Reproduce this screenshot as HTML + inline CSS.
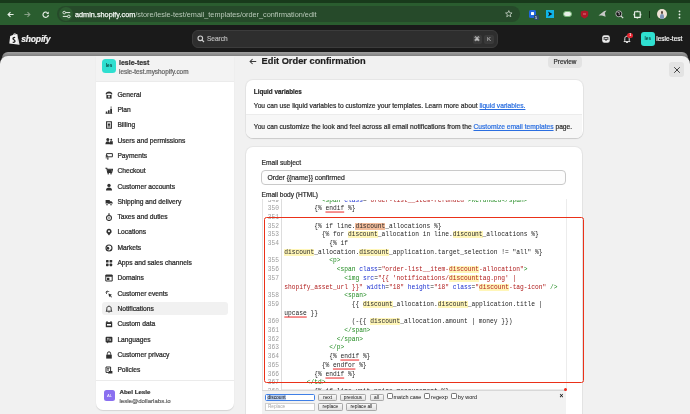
<!DOCTYPE html>
<html><head><meta charset="utf-8">
<style>
*{margin:0;padding:0;box-sizing:border-box}
html,body{width:690px;height:414px;overflow:hidden;background:#1a1a1a;font-family:"Liberation Sans",sans-serif;position:relative}
body{will-change:transform}
.a{position:absolute}
#chrome{left:0;top:0;width:690px;height:25.4px;background:#2a5d2f}
#topband{left:0;top:0;width:690px;height:2.8px;background:#183a1b}
#url{left:57px;top:5.8px;width:463px;height:16px;border-radius:8px;background:#264a2a}
#urltext{left:75px;top:8.7px;font-size:7.3px;color:#b9c9b9;white-space:nowrap;line-height:12px}
#urltext b{color:#f2f6f2;font-weight:normal;-webkit-text-stroke:.25px #f2f6f2}
#topbar{left:0;top:25px;width:690px;height:28px;background:#1a1a1a}
#search{left:192px;top:30px;width:306px;height:18px;border-radius:6px;background:#2e2e2e;border:1px solid #3c3c3c}
#stripe{left:2px;top:51.8px;width:686px;height:6px;background:linear-gradient(#a0a0a0,#707070);border-radius:8px 8px 0 0}
#page{left:0;top:55.6px;width:690px;height:358.4px;background:#f1f1f1;border-radius:8px 8px 0 0}
#side{left:96px;top:56px;width:138px;height:354px;background:#fff;border-radius:0 0 7px 7px;box-shadow:0 1px 1px rgba(0,0,0,.12)}
#sidehead{left:96px;top:55.6px;width:138px;height:26px;background:#f3f3f3;border-bottom:1px solid #ebebeb}
.nav{position:absolute;left:117.4px;font-size:6.7px;color:#2a2a2a;white-space:nowrap;line-height:10px;-webkit-text-stroke:.24px #2a2a2a}
.ico{position:absolute;left:104.5px;width:8px;height:8px}
.card{position:absolute;background:#fff;border-radius:7px;box-shadow:0 1px 1px rgba(0,0,0,.12),0 0 0 1px rgba(0,0,0,.045)}
.t{position:absolute;white-space:nowrap;line-height:10px;color:#2a2a2a;-webkit-text-stroke:.2px currentColor}
#code{left:262px;top:199px;width:305px;height:191px;background:#fff;border:1px solid #ececec;border-top:none;overflow:hidden}
#gutter{left:262px;top:199px;width:20px;height:191px;background:#fff;border-right:1px solid #ddd;border-left:1px solid #e3e3e3}
#codeclip{left:262px;top:199.5px;width:304px;height:190px;overflow:hidden}
.ln{position:absolute;left:0;width:17px;text-align:right;font-family:"Liberation Mono",monospace;font-size:6.24px;color:#9c9c9c;line-height:8.7px;transform:scaleY(1.25);transform-origin:0 50%}
.cl{position:absolute;left:22.3px;font-family:"Liberation Mono",monospace;font-size:6.24px;color:#262626;line-height:8.7px;white-space:pre;transform:scaleY(1.25);transform-origin:0 50%}
.tg{color:#1f8a1f}.at{color:#1a2fd0}.st{color:#b01c1c}
.hl{background:linear-gradient(transparent 8%,#fff6b8 8%,#fff6b8 92%,transparent 92%)}.cur{background:linear-gradient(transparent 8%,#f3bd9c 8%,#f3bd9c 92%,transparent 92%)}
.sq{text-decoration:underline solid #f05050;text-decoration-thickness:.6px;text-underline-offset:.8px;text-decoration-skip-ink:none}
#redbox{left:264.1px;top:216.8px;width:319.6px;height:166.2px;border:1.8px solid #ea3119;border-radius:2.5px}
#findbar{left:262px;top:389.5px;width:304px;height:25px;background:#f2f2f2;border-top:1px solid #d8d8d8}
.inp{position:absolute;background:#fff;border:.8px solid #c4c4c4;font-size:4.6px;line-height:5.5px;padding-left:1.8px;color:#222}
.btn{position:absolute;height:7px;background:linear-gradient(#f9f9f9,#e2e2e2);border:.8px solid #a8a8a8;border-radius:1.2px;font-size:4.8px;line-height:5.6px;text-align:center;color:#111}
.cb{position:absolute;width:6px;height:6.3px;border:.7px solid #777;border-radius:1.2px;background:#fff}
.fl{position:absolute;font-size:5.45px;color:#111;white-space:nowrap;line-height:7px}
</style></head><body>
<!-- Chrome -->
<div id="chrome" class="a"></div>
<div id="topband" class="a"></div>
<div id="url" class="a"></div>
<!-- back / fwd / reload -->
<svg class="a" style="left:7.2px;top:10.9px" width="7" height="7" viewBox="0 0 7 7"><path d="M6.6 3.5H1.2M3.5 1.1 1.1 3.5 3.5 5.9" fill="none" stroke="#e6eee6" stroke-width="1.2"/></svg>
<svg class="a" style="left:24.3px;top:10.9px" width="7" height="7" viewBox="0 0 7 7"><path d="M.4 3.5h5.4M3.5 1.1 5.9 3.5 3.5 5.9" fill="none" stroke="#86a086" stroke-width="1.1"/></svg>
<svg class="a" style="left:41.6px;top:10.6px" width="7.4" height="7.4" viewBox="0 0 8 8"><path d="M6.9 4.2A2.9 2.9 0 1 1 5.9 1.8" fill="none" stroke="#e6eee6" stroke-width="1.25"/><path d="M7.3.5V3.3H4.5Z" fill="#e6eee6"/></svg>
<div class="a" style="left:58.5px;top:7px;width:14px;height:14px;border-radius:50%;background:#2d5c31"></div>
<svg class="a" style="left:61.5px;top:9.5px" width="9" height="9" viewBox="0 0 9 9"><path d="M3.6 2.6H8.2M.8 6.4h4.6" stroke="#e6eee6" stroke-width="1"/><circle cx="2.2" cy="2.6" r="1.3" fill="none" stroke="#e6eee6" stroke-width=".9"/><circle cx="6.8" cy="6.4" r="1.3" fill="none" stroke="#e6eee6" stroke-width=".9"/></svg>
<div id="urltext" class="a"><b>admin.shopify.com</b>/store/lesle-test/email_templates/order_confirmation/edit</div>
<!-- star -->
<svg class="a" style="left:505px;top:10.3px" width="7.6" height="7.6" viewBox="0 0 10 10"><path d="M5 .8 6.2 3.7 9.3 3.9 6.9 5.9 7.7 8.9 5 7.2 2.3 8.9 3.1 5.9.7 3.9 3.8 3.7Z" fill="none" stroke="#dfe8df" stroke-width=".9"/></svg>
<!-- extension icons -->
<div class="a" style="left:529px;top:10px;width:7px;height:8px;background:#2266dd;border-radius:1.5px"></div>
<div class="a" style="left:531px;top:11.5px;width:3px;height:3px;background:#fff;border-radius:.5px"></div>
<div class="a" style="left:533.5px;top:15px;width:5px;height:5px;background:#2f4a6a;border-radius:1px;font-size:4px;color:#fff;line-height:5px;text-align:center">5</div>
<div class="a" style="left:546px;top:10px;width:8px;height:8px;background:#11b5e6"></div>
<svg class="a" style="left:546px;top:10px" width="8" height="8" viewBox="0 0 8 8"><path d="M2 1.6 6.4 4 2 6.4 3.2 4Z" fill="#111"/></svg>
<div class="a" style="left:563px;top:11px;width:9px;height:6px;border-radius:3px;background:#e8f0e8;border:1px solid #7ab87a"></div>
<svg class="a" style="left:580px;top:10px" width="9" height="9" viewBox="0 0 9 9"><path d="M.8 1.6 4.5 .6 8.2 1.6V5C8.2 7 4.5 8.6 4.5 8.6S.8 7 .8 5Z" fill="#b01828"/><path d="M3 4h3" stroke="#f0a0a0" stroke-width=".7"/></svg>
<svg class="a" style="left:598px;top:10px" width="9" height="8" viewBox="0 0 9 8"><path d="M.5 5.5 6 1.2 8.5 .6 6.8 3 7.6 6.8 4 5.6Z" fill="#c8c8c8"/></svg>
<svg class="a" style="left:614.5px;top:10px" width="9" height="9" viewBox="0 0 9 9"><circle cx="3.8" cy="3.8" r="3" fill="#111" stroke="#ccc" stroke-width=".8"/><path d="M5.8 5.8 8.2 8.2" stroke="#ddd" stroke-width="1.2"/><path d="M2.6 2.4h1.6v2.8" stroke="#eee" stroke-width=".7" fill="none"/></svg>
<svg class="a" style="left:632.5px;top:9.5px" width="9" height="9" viewBox="0 0 9 9"><path d="M1.6 1.8H7.2V7.4H1.6Z" fill="none" stroke="#eef3ee" stroke-width="1.1" stroke-linejoin="round"/><path d="M3.6 1.2h1.6M7.8 3.8v1.6M3.6 8h1.6M1 3.8v1.6" stroke="#eef3ee" stroke-width="1"/></svg>
<div class="a" style="left:649px;top:10.5px;width:.8px;height:7px;background:#0e2a0e"></div>
<div class="a" style="left:657px;top:9px;width:10px;height:10px;border-radius:50%;background:#efe3d6;overflow:hidden"><div class="a" style="left:3.6px;top:2px;width:2.8px;height:3px;border-radius:50%;background:#5a4a40"></div><div class="a" style="left:2.8px;top:5px;width:4.4px;height:6px;border-radius:2px 2px 0 0;background:#7f96b8"></div></div>
<svg class="a" style="left:677px;top:9.5px" width="5" height="9" viewBox="0 0 5 9"><circle cx="2.5" cy="1.3" r=".9" fill="#e8efe8"/><circle cx="2.5" cy="4.5" r=".9" fill="#e8efe8"/><circle cx="2.5" cy="7.7" r=".9" fill="#e8efe8"/></svg>

<!-- Shopify top bar -->
<div id="topbar" class="a"></div>
<svg class="a" style="left:8.6px;top:32.8px" width="11" height="12" viewBox="0 0 11 12"><path d="M1.2 2.9 4 2.1C4.3 .9 5 .3 5.8.3c.6 0 1 .4 1.2 1l1-.3 2.6 10.8L.3 10.6Z" fill="#f4f4f4"/><path d="M4.8 1.9c.2-.7.6-1 .9-1 .3 0 .5.3.6.7" fill="none" stroke="#1a1a1a" stroke-width=".5"/><path d="M6.1 4.7c-.6-.4-2-.3-2.1.8-.1 1.2 2.1 1.2 2 2.7-.1 1.1-1.4 1.3-2.3.8" fill="none" stroke="#1a1a1a" stroke-width="1.25"/><path d="M8.1 1.1 9.3 11.6" stroke="#c4c4c4" stroke-width=".6"/></svg>
<div class="t" style="left:21.2px;top:34.2px;font-size:8.6px;color:#f2f2f2;font-weight:bold;font-style:italic;letter-spacing:-.2px;line-height:11px">shopify</div>
<div id="search" class="a"></div>
<svg class="a" style="left:196.8px;top:35.2px" width="8" height="8" viewBox="0 0 8 8"><circle cx="3.3" cy="3.3" r="2.3" fill="none" stroke="#d0d0d0" stroke-width="1.1"/><path d="M5 5 7 7" stroke="#d0d0d0" stroke-width="1.1"/></svg>
<div class="t" style="left:207px;top:33.9px;font-size:6.5px;color:#b8b8b8">Search</div>
<div class="a" style="left:472.5px;top:34.5px;width:9.8px;height:9.2px;border-radius:2px;background:#3a3a3a;color:#c8c8c8;font-size:6px;line-height:9.2px;text-align:center;font-weight:bold">&#8984;</div>
<div class="a" style="left:484px;top:34.5px;width:9.8px;height:9.2px;border-radius:2px;background:#3a3a3a;color:#c8c8c8;font-size:6px;line-height:9.2px;text-align:center">K</div>
<svg class="a" style="left:601.5px;top:35.2px" width="8" height="8" viewBox="0 0 8 8"><rect x=".2" y=".2" width="7.6" height="7.6" rx="2.2" fill="#ececec"/><path d="M1.6 1.9h4.8v.9H1.6Z M1.4 3.6h1.8l.5.9h.6l.5-.9h1.8v.9H5.3l-.5 1.1H3.2l-.5-1.1H1.4Z" fill="#1a1a1a"/></svg>
<svg class="a" style="left:622.5px;top:34.5px" width="8" height="9" viewBox="0 0 8 9"><path d="M4 1.2C2.6 1.2 1.8 2.2 1.8 3.6v1.8L1 6.6h6l-.8-1.2V3.6C6.2 2.2 5.4 1.2 4 1.2Z" fill="none" stroke="#e8e8e8" stroke-width="1"/><path d="M3 7.4h2" stroke="#e8e8e8" stroke-width="1"/></svg>
<div class="a" style="left:627.4px;top:32.5px;width:5.6px;height:5.6px;border-radius:50%;background:#e3232f;color:#fff;font-size:3.8px;line-height:5.6px;text-align:center;font-weight:bold">1</div>
<div class="a" style="left:641px;top:32px;width:13.5px;height:13.5px;border-radius:3px;background:#2fdfd0;color:#0a3f3b;font-size:4.6px;line-height:13.5px;text-align:center;font-weight:bold">les</div>
<div class="t" style="left:656.3px;top:34px;font-size:6.5px;color:#f4f4f4;-webkit-text-stroke:.2px #f4f4f4">lesle-test</div>

<!-- Main -->
<div id="stripe" class="a"></div>
<div id="page" class="a"></div>
<div id="side" class="a"></div>
<div id="sidehead" class="a"></div>
<div class="a" style="left:102px;top:59px;width:14px;height:14px;border-radius:3.5px;background:#2fdfd0;color:#0a3f3b;font-size:4.6px;line-height:14px;text-align:center;font-weight:bold">les</div>
<div class="t" style="left:119px;top:58px;font-size:7px;font-weight:bold;color:#303030">lesle-test</div>
<div class="t" style="left:119px;top:67.3px;font-size:6.4px;color:#616161">lesle-test.myshopify.com</div>
<svg class="ico" viewBox="0 0 8 8" style="top:90.70px"><path d="M.6 3.2C.8 1.4 2.2.6 4 .6s3.2.8 3.4 2.6L6 3.6 5.6 2.6H2.4L2 3.6Z" fill="#303030"/><path d="M1.4 4h5.2v3.6H1.4Z" fill="#303030"/><circle cx="4" cy="5.6" r="1.1" fill="#fff"/><circle cx="4" cy="5.6" r=".45" fill="#303030"/></svg>
<div class="nav" style="top:89.70px">General</div>
<svg class="ico" viewBox="0 0 8 8" style="top:106.00px"><path d="M.8 5.4h1.6v2.2H.8Z M3 4.2h1.6v3.4H3Z M5.2 2.8h1.8v4.8H5.2Z" fill="#303030"/><path d="M6.1 .4v2" stroke="#303030" stroke-width=".7"/><path d="M.6 7.6h6.8" stroke="#303030" stroke-width=".6"/></svg>
<div class="nav" style="top:105.00px">Plan</div>
<svg class="ico" viewBox="0 0 8 8" style="top:121.30px"><path d="M1.6 0.8h4.8v6.4H1.6Z" fill="none" stroke="#303030" stroke-width="1.1"/><path d="M2.8 2.4h2.4v2.4H2.8Z M2.6 5.4h2.8v.8H2.6Z" fill="#303030"/></svg>
<div class="nav" style="top:120.30px">Billing</div>
<svg class="ico" viewBox="0 0 8 8" style="top:136.60px"><circle cx="2.8" cy="2.6" r="1.5" fill="#303030"/><path d="M0.4 7.2c0-2 1-3 2.4-3s2.4 1 2.4 3Z" fill="#303030"/><path d="M5 4.2h2.8v3.2H5Z" fill="#303030"/><circle cx="6.2" cy="2.8" r="1" fill="#303030"/></svg>
<div class="nav" style="top:135.60px">Users and permissions</div>
<svg class="ico" viewBox="0 0 8 8" style="top:151.90px"><path d="M1.6 1.6h5.8v3.2H1.6Z" fill="none" stroke="#303030" stroke-width="1"/><path d="M0.6 3.6h2.4v1h-2.4Z M0.6 5.4h3v.9h-3Z M2 6.6h1.6v.8H2Z" fill="#303030"/></svg>
<div class="nav" style="top:150.90px">Payments</div>
<svg class="ico" viewBox="0 0 8 8" style="top:167.20px"><path d="M0.4 1.2h1.4l.9 4.2h4L7.6 2.2H2.2" fill="none" stroke="#303030" stroke-width="1.1"/><path d="M2.6 2.6h4.4l-.6 2.4H3Z" fill="#303030"/><circle cx="3.2" cy="6.8" r=".8" fill="#303030"/><circle cx="6" cy="6.8" r=".8" fill="#303030"/></svg>
<div class="nav" style="top:166.20px">Checkout</div>
<svg class="ico" viewBox="0 0 8 8" style="top:182.50px"><circle cx="4" cy="2.4" r="1.7" fill="#303030"/><path d="M1 7.4c0-2.2 1.2-3 3-3s3 .8 3 3Z" fill="#303030"/></svg>
<div class="nav" style="top:181.50px">Customer accounts</div>
<svg class="ico" viewBox="0 0 8 8" style="top:197.80px"><path d="M0.6 2h4.2v3.8H0.6Z M4.8 3.2h1.6l1.2 1.4v1.2H4.8Z" fill="#303030"/><circle cx="2" cy="6.4" r="1" fill="#303030" stroke="#fff" stroke-width=".5"/><circle cx="6" cy="6.4" r="1" fill="#303030" stroke="#fff" stroke-width=".5"/></svg>
<div class="nav" style="top:196.80px">Shipping and delivery</div>
<svg class="ico" viewBox="0 0 8 8" style="top:213.10px"><path d="M3 0.6h2l-.6 1.4h-.8Z" fill="#303030"/><circle cx="4" cy="5" r="2.5" fill="none" stroke="#303030" stroke-width="1.1"/><path d="M3.6 3.8h.8v2.4h-.8Z" fill="#303030"/></svg>
<div class="nav" style="top:212.10px">Taxes and duties</div>
<svg class="ico" viewBox="0 0 8 8" style="top:228.40px"><path d="M4 7.6 1.6 4.4A2.6 2.6 0 1 1 6.4 4.4Z" fill="#303030"/><circle cx="4" cy="3.2" r="1" fill="#fff"/></svg>
<div class="nav" style="top:227.40px">Locations</div>
<svg class="ico" viewBox="0 0 8 8" style="top:243.70px"><circle cx="4" cy="4" r="3" fill="none" stroke="#303030" stroke-width="1.1"/><path d="M2 2.4l2 .8.4 1.6-1 1-1.6-.6Z M5 5.4l1.6.6-1.4 1.2Z" fill="#303030"/></svg>
<div class="nav" style="top:242.70px">Markets</div>
<svg class="ico" viewBox="0 0 8 8" style="top:259.00px"><rect x="1" y="1" width="2.6" height="2.6" rx=".6" fill="#303030"/><rect x="4.6" y="1" width="2.6" height="2.6" rx=".6" fill="#303030"/><rect x="1" y="4.6" width="2.6" height="2.6" rx=".6" fill="#303030"/><rect x="4.6" y="4.6" width="2.6" height="2.6" rx=".6" fill="#303030"/></svg>
<div class="nav" style="top:258.00px">Apps and sales channels</div>
<svg class="ico" viewBox="0 0 8 8" style="top:274.30px"><path d="M0.8 1h6.4v6H0.8Z" fill="none" stroke="#303030" stroke-width="1"/><path d="M0.8 1h6.4v1.8H0.8Z M2 3.8h2.4v2.2H2Z" fill="#303030"/></svg>
<div class="nav" style="top:273.30px">Domains</div>
<svg class="ico" viewBox="0 0 8 8" style="top:289.60px"><path d="M3.4 3.4l3.6 1.4-1.4.6 1.4 1.6-.8.6-1.2-1.6-.8 1.2Z" fill="#303030"/><path d="M2.4 0.6v1.6M0.6 2.4h1.6M1 1 2 2M4.2 1 3.2 2M1 4 2 3" stroke="#303030" stroke-width=".8"/></svg>
<div class="nav" style="top:288.60px">Customer events</div>
<div class="a" style="left:102.4px;top:302.30px;width:125.4px;height:13.2px;border-radius:3px;background:#f1f1f1"></div>
<svg class="ico" viewBox="0 0 8 8" style="top:304.90px"><path d="M4 1.2c-1.4 0-2.2 1-2.2 2.4v1.6L1 6.2h6l-.8-1V3.6C6.2 2.2 5.4 1.2 4 1.2Z" fill="none" stroke="#303030" stroke-width="1"/><path d="M3.2 6.8h1.6l-.3.8h-1Z" fill="#303030"/></svg>
<div class="nav" style="top:303.90px">Notifications</div>
<svg class="ico" viewBox="0 0 8 8" style="top:320.20px"><path d="M0.8 2.2h6.4v5H0.8Z" fill="#303030"/><path d="M2 1v2M6 1v2" stroke="#303030" stroke-width="1"/><rect x="2" y="4" width="4" height="1.6" fill="#fff"/></svg>
<div class="nav" style="top:319.20px">Custom data</div>
<svg class="ico" viewBox="0 0 8 8" style="top:335.50px"><path d="M1.6.8h4.8a1 1 0 0 1 1 1v3.6a1 1 0 0 1-1 1H3.4L2.2 7.6V6.4h-.6a1 1 0 0 1-1-1V1.8a1 1 0 0 1 1-1Z" fill="#303030"/><path d="M2 2.4h1.8M2.9 2.2v2.4M2.2 4.4l.8-1M4.6 2.4l1.2 2.6M5.6 2.6 4.6 4.8" stroke="#fff" stroke-width=".55"/></svg>
<div class="nav" style="top:334.50px">Languages</div>
<svg class="ico" viewBox="0 0 8 8" style="top:350.80px"><path d="M1.2 3.6h5.6v4H1.2Z" fill="#303030"/><path d="M2.4 3.6V2.4a1.6 1.6 0 0 1 3.2 0v1.2" fill="none" stroke="#303030" stroke-width="1"/></svg>
<div class="nav" style="top:349.80px">Customer privacy</div>
<svg class="ico" viewBox="0 0 8 8" style="top:366.10px"><path d="M1 1h4.6v5.4H1Z" fill="none" stroke="#303030" stroke-width="1"/><path d="M2 2.2h2.4v.8H2Z M2 3.6h2v.8H2Z M4 5h3.4v2.6H3Z" fill="#303030"/></svg>
<div class="nav" style="top:365.10px">Policies</div>
<div class="a" style="left:96px;top:380px;width:138px;height:1px;background:#ebebeb"></div>
<div class="a" style="left:104px;top:389.5px;width:11px;height:11px;border-radius:2.5px;background:#8a6ff0;color:#fff;font-size:4.2px;line-height:11px;text-align:center">AL</div>
<div class="t" style="left:119.5px;top:387px;font-size:6.2px;font-weight:bold;color:#303030">Abel Lesle</div>
<div class="t" style="left:119.5px;top:395.5px;font-size:6.08px;color:#616161">lesle@dollarlabs.io</div>

<!-- Header -->
<svg class="a" style="left:249px;top:57.5px" width="8" height="7" viewBox="0 0 8 7"><path d="M7.2 3.5H1.2M3.6 1 1.1 3.5 3.6 6" fill="none" stroke="#3a3a3a" stroke-width="1.05"/></svg>
<div class="t" style="left:261.6px;top:56.2px;font-size:9.27px;font-weight:bold;color:#1e1e1e;line-height:11px">Edit Order confirmation</div>
<div class="a" style="left:548.2px;top:56px;width:33.5px;height:11.7px;border-radius:4px;background:#e3e3e3"></div>
<div class="t" style="left:553.6px;top:57px;font-size:6.4px;color:#303030">Preview</div>

<!-- Cards -->
<div class="card" style="left:246px;top:79.5px;width:336.5px;height:58px;overflow:hidden">
  <div class="a" style="left:0;top:34px;width:336px;height:25px;background:#f7f7f7;border-top:.6px solid #ececec"></div>
</div>
<div class="t" style="left:253.8px;top:86.8px;font-size:6.3px;font-weight:bold">Liquid variables</div>
<div class="t" style="left:253.8px;top:101.1px;font-size:6.68px">You can use liquid variables to customize your templates. Learn more about <span style="color:#2a6ee0;-webkit-text-stroke-color:#2a6ee0;text-decoration:underline;text-decoration-thickness:.5px;text-underline-offset:.6px;text-decoration-skip-ink:none">liquid variables.</span></div>
<div class="t" style="left:253.8px;top:121.6px;font-size:6.685px">You can customize the look and feel across all email notifications from the <span style="color:#2a6ee0;-webkit-text-stroke-color:#2a6ee0;text-decoration:underline;text-decoration-thickness:.5px;text-underline-offset:.6px;text-decoration-skip-ink:none">Customize email templates</span> page.</div>

<div class="card" style="left:246px;top:147px;width:336px;height:290px"></div>
<div class="t" style="left:261.6px;top:157.9px;font-size:6.63px">Email subject</div>
<div class="a" style="left:261.2px;top:169.5px;width:305px;height:15.2px;border-radius:4px;background:#fdfdfd;border:.7px solid #c9c9c9"></div>
<div class="t" style="left:267.4px;top:172.9px;font-size:6.84px">Order {{name}} confirmed</div>
<div class="t" style="left:261.6px;top:189.8px;font-size:6.56px">Email body (HTML)</div>

<div id="code" class="a"></div>
<div id="gutter" class="a"></div>
<div id="codeclip" class="a">
<div style="position:absolute;left:0;top:-199.5px;width:304px;height:600px">
<div class="ln" style="top:196.55px">349</div>
<div class="cl" style="top:196.55px">          <span class="tg">&lt;span</span> <span class="at">class</span>=<span class="st">"order-list__item-refunded"</span><span class="tg">&gt;</span><span class="tg">Refunded</span><span class="tg">&lt;/span&gt;</span></div>
<div class="ln" style="top:205.25px">350</div>
<div class="cl" style="top:205.25px">        {% <span class="sq">endif</span> %}</div>
<div class="ln" style="top:213.95px">351</div>
<div class="cl" style="top:213.95px"></div>
<div class="ln" style="top:222.65px">352</div>
<div class="cl" style="top:222.65px">        {% if line.<span class="cur">discount</span>_allocations %}</div>
<div class="ln" style="top:231.35px">353</div>
<div class="cl" style="top:231.35px">          {% for <span class="hl">discount</span>_allocation in line.<span class="hl">discount</span>_allocations %}</div>
<div class="ln" style="top:240.05px">354</div>
<div class="cl" style="top:240.05px">            {% if</div>
<div class="cl" style="top:248.75px"><span class="hl">discount</span>_allocation.<span class="hl">discount</span>_application.target_selection != "all" %}</div>
<div class="ln" style="top:257.45px">355</div>
<div class="cl" style="top:257.45px">            <span class="tg">&lt;p&gt;</span></div>
<div class="ln" style="top:266.15px">356</div>
<div class="cl" style="top:266.15px">              <span class="tg">&lt;span</span> <span class="at">class</span>=<span class="st">"order-list__item-</span><span class="st hl">discount</span><span class="st">-allocation"</span><span class="tg">&gt;</span></div>
<div class="ln" style="top:274.85px">357</div>
<div class="cl" style="top:274.85px">                <span class="tg">&lt;img</span> <span class="at">src</span>=<span class="st">"{{ 'notifications/</span><span class="st hl">discount</span><span class="st">tag.png' |</span></div>
<div class="cl" style="top:283.55px"><span class="st">shopify_asset_url }}"</span> <span class="at">width</span>=<span class="st">"18"</span> <span class="at">height</span>=<span class="st">"18"</span> <span class="at">class</span>=<span class="st">"</span><span class="st hl">discount</span><span class="st">-tag-icon"</span> <span class="tg">/&gt;</span></div>
<div class="ln" style="top:292.25px">358</div>
<div class="cl" style="top:292.25px">                <span class="tg">&lt;span&gt;</span></div>
<div class="ln" style="top:300.95px">359</div>
<div class="cl" style="top:300.95px">                  {{ <span class="hl">discount</span>_allocation.<span class="hl">discount</span>_application.title |</div>
<div class="cl" style="top:309.65px"><span class="sq">upcase</span> }}</div>
<div class="ln" style="top:318.35px">360</div>
<div class="cl" style="top:318.35px">                  (-{{ <span class="hl">discount</span>_allocation.amount | money }})</div>
<div class="ln" style="top:327.05px">361</div>
<div class="cl" style="top:327.05px">                <span class="tg">&lt;/span&gt;</span></div>
<div class="ln" style="top:335.75px">362</div>
<div class="cl" style="top:335.75px">              <span class="tg">&lt;/span&gt;</span></div>
<div class="ln" style="top:344.45px">363</div>
<div class="cl" style="top:344.45px">            <span class="tg">&lt;/p&gt;</span></div>
<div class="ln" style="top:353.15px">364</div>
<div class="cl" style="top:353.15px">            {% <span class="sq">endif</span> %}</div>
<div class="ln" style="top:361.85px">365</div>
<div class="cl" style="top:361.85px">          {% <span class="sq">endfor</span> %}</div>
<div class="ln" style="top:370.55px">366</div>
<div class="cl" style="top:370.55px">        {% <span class="sq">endif</span> %}</div>
<div class="ln" style="top:379.25px">367</div>
<div class="cl" style="top:379.25px">      <span class="tg">&lt;/td&gt;</span></div>
<div class="ln" style="top:387.95px">368</div>
<div class="cl" style="top:387.95px">        {% if line.unit_price_measurement %}</div>
</div>
</div>
<div id="redbox" class="a"></div>
<div id="findbar" class="a"></div>
<div class="a" style="left:563.6px;top:387.5px;width:3.4px;height:3.4px;border-radius:50%;background:#ee2a1e"></div>
<div class="inp" style="left:265.2px;top:393.6px;width:50.2px;height:7px;border:1.1px solid #3f7fe6;border-radius:1.6px;padding-left:1.2px"><span style="background:#b9cff2;color:#111;font-size:4.9px">discount</span></div>
<div class="btn" style="left:318px;top:393.6px;width:18.9px">next</div>
<div class="btn" style="left:339.6px;top:393.6px;width:26.7px">previous</div>
<div class="btn" style="left:369.5px;top:393.6px;width:14px">all</div>
<div class="cb" style="left:386.5px;top:392.6px"></div>
<div class="fl" style="left:393.6px;top:393.6px">match case</div>
<div class="cb" style="left:423.9px;top:392.6px"></div>
<div class="fl" style="left:431.1px;top:393.6px">regexp</div>
<div class="cb" style="left:451px;top:392.6px"></div>
<div class="fl" style="left:458px;top:393.6px">by word</div>
<div class="fl" style="left:559.6px;top:391.8px;font-size:6.5px;font-weight:bold">&#215;</div>
<div class="inp" style="left:265.2px;top:403.2px;width:50.2px;height:7.8px;color:#a8a8a8;border-color:#cfcfcf;font-size:4.7px;line-height:6.4px">Replace</div>
<div class="btn" style="left:318px;top:403.2px;width:24.8px;height:7.6px;line-height:6.2px">replace</div>
<div class="btn" style="left:346.1px;top:403.2px;width:30.6px;height:7.6px;line-height:6.2px">replace all</div>

<!-- close btn -->
<div class="a" style="left:669px;top:62px;width:15px;height:15px;border-radius:3px;background:#e3e3e3"></div>
<svg class="a" style="left:672.5px;top:65.5px" width="8" height="8" viewBox="0 0 8 8"><path d="M1.2 1.2 6.8 6.8M6.8 1.2 1.2 6.8" stroke="#303030" stroke-width=".9"/></svg>
</body></html>
